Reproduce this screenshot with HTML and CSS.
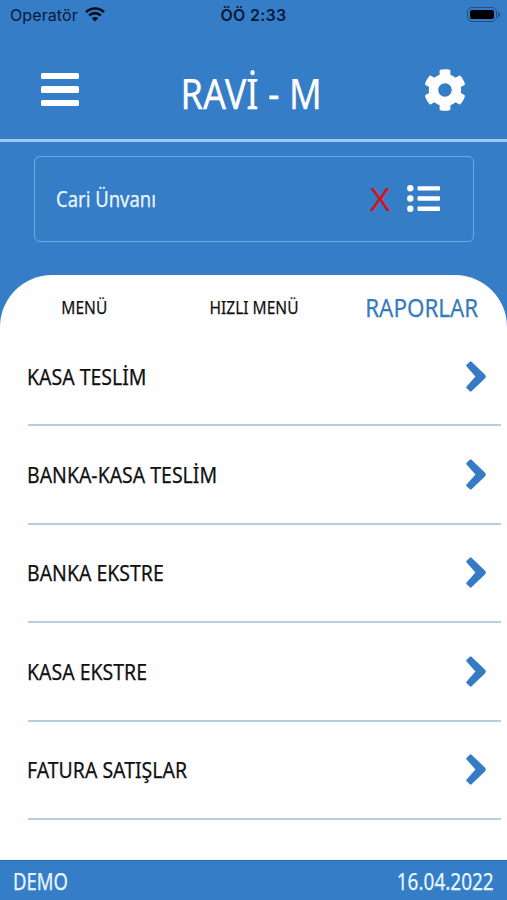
FILE: index.html
```html
<!DOCTYPE html>
<html lang="tr">
<head>
  <meta charset="UTF-8">
  <meta name="viewport" content="width=device-width, initial-scale=1">
  <title>RAVİ - M</title>
  <link rel="stylesheet" href="styles.css">
</head>
<body>
  <svg width="0" height="0" style="display:none">
    <symbol id="chevron" viewBox="0 0 20 31">
      <path d="M4.700 1.500L18 14.300q1.200 1.200 0 2.400L4.700 29.500L1.500 26.300L11 15.500L1.500 4.700z" />
    </symbol>
  </svg>

  <div class="app">
    <div class="status-bar">
      <div class="carrier">
        <span>Operatör</span>
        <svg class="wifi" viewBox="0 0 20 15">
          <path d="M1 5.2a12.7 12.7 0 0 1 18 0" />
          <path d="M4.2 8.5a8.2 8.2 0 0 1 11.6 0" />
          <path class="dot" d="M10 14.5L6.7 11.3a4.7 4.7 0 0 1 6.6 0z" />
        </svg>
      </div>
      <div class="clock">ÖÖ 2:33</div>
      <div class="battery"><div class="battery-level"></div></div>
    </div>

    <header class="header">
      <button class="icon-btn menu-btn" aria-label="Menü">
        <span></span><span></span><span></span>
      </button>
      <h1><span class="text">RAVİ - M</span></h1>
      <button class="icon-btn" aria-label="Ayarlar">
        <svg class="gear" viewBox="18 8 476 496">
          <path d="M487.4 315.7l-42.6-24.6c4.3-23.2 4.3-47 0-70.2l42.6-24.6c4.9-2.8 7.1-8.6 5.5-14-11.1-35.6-30-67.8-54.7-94.6-3.8-4.1-10-5.1-14.8-2.3L380.8 110c-17.9-15.4-38.5-27.3-60.8-35.1V25.8c0-5.6-3.9-10.5-9.4-11.7-36.7-8.2-74.3-7.8-109.2 0-5.5 1.2-9.4 6.1-9.4 11.7V75c-22.2 7.9-42.8 19.8-60.8 35.1L88.7 85.5c-4.9-2.8-11-1.9-14.8 2.3-24.7 26.7-43.6 58.9-54.7 94.6-1.7 5.4.6 11.2 5.5 14L67.3 221c-4.3 23.2-4.3 47 0 70.2l-42.6 24.6c-4.9 2.8-7.1 8.6-5.5 14 11.1 35.6 30 67.8 54.7 94.6 3.8 4.1 10 5.1 14.8 2.3l42.6-24.6c17.9 15.4 38.5 27.3 60.8 35.1v49.2c0 5.6 3.9 10.5 9.4 11.7 36.7 8.2 74.3 7.8 109.2 0 5.5-1.2 9.4-6.1 9.4-11.7v-49.2c22.2-7.9 42.8-19.8 60.8-35.1l42.6 24.6c4.9 2.8 11 1.9 14.8-2.3 24.7-26.7 43.6-58.9 54.7-94.6 1.5-5.5-.7-11.3-5.6-14.1zM256 336c-44.1 0-80-35.9-80-80s35.9-80 80-80 80 35.9 80 80-35.9 80-80 80z" />
        </svg>
      </button>
    </header>

    <section class="customer">
      <div class="customer-box">
        <span class="text customer-name">Cari Ünvanı</span>
        <button class="icon-btn clear-btn" aria-label="Temizle">X</button>
        <button class="icon-btn" aria-label="Liste">
          <svg class="list-icon" viewBox="0 0 33 27">
            <circle cx="3.3" cy="3.3" r="3.2" />
            <circle cx="3.3" cy="13.5" r="3.2" />
            <circle cx="3.3" cy="23.7" r="3.2" />
            <rect x="10.5" y="1.2" width="22.5" height="4.4" rx="1" />
            <rect x="10.5" y="11.3" width="22.5" height="4.4" rx="1" />
            <rect x="10.5" y="21.5" width="22.5" height="4.4" rx="1" />
          </svg>
        </button>
      </div>
    </section>

    <nav class="tabs">
      <div class="tab"><span class="text">MENÜ</span></div>
      <div class="tab"><span class="text">HIZLI MENÜ</span></div>
      <div class="tab active"><span class="text">RAPORLAR</span></div>
    </nav>

    <ul class="report-list">
      <li>
        <span class="text">KASA TESLİM</span>
        <svg class="arrow"><use href="#chevron" /></svg>
      </li>
      <li>
        <span class="text">BANKA-KASA TESLİM</span>
        <svg class="arrow"><use href="#chevron" /></svg>
      </li>
      <li>
        <span class="text">BANKA EKSTRE</span>
        <svg class="arrow"><use href="#chevron" /></svg>
      </li>
      <li>
        <span class="text">KASA EKSTRE</span>
        <svg class="arrow"><use href="#chevron" /></svg>
      </li>
      <li>
        <span class="text">FATURA SATIŞLAR</span>
        <svg class="arrow"><use href="#chevron" /></svg>
      </li>
    </ul>

    <footer class="footer">
      <span class="text">DEMO</span>
      <span class="text date">16.04.2022</span>
    </footer>
  </div>
</body>
</html>
```
FILE: styles.css
```css
* {
  box-sizing: border-box;
}
body {
  margin: 0;
  font-family: 'Noto Sans', sans-serif;
  background: #fefefe;
  color: #111;
}
.app {
  display: flex;
  flex-direction: column;
  height: 900px;
  background: linear-gradient(#367dc8 329px, #fefefe 329px);
}
/* narrow look for all the app labels */
.text {
  display: inline-block;
  white-space: nowrap;
  transform: scaleX(0.865);
  transform-origin: left center;
  -webkit-text-stroke: 0.25px currentColor;
}
.icon-btn {
  display: flex;
  padding: 0;
  border: none;
  background: none;
  cursor: pointer;
}

.status-bar {
  display: grid;
  grid-template-columns: 1fr auto 1fr;
  align-items: center;
  height: 29px;
  padding: 0 10px;
  font-family: Inter, sans-serif;
  color: #061a38;
}
.carrier {
  display: flex;
  align-items: center;
  gap: 7px;
  font-size: 16px;
  letter-spacing: 0.1px;
}
.wifi {
  width: 20px;
  height: 15px;
  fill: none;
  stroke: #04101f;
  stroke-width: 2.6;
}
.wifi .dot {
  fill: #04101f;
  stroke: none;
}
.clock {
  font-size: 16px;
  font-weight: 600;
  letter-spacing: 0.3px;
}
.battery {
  position: relative;
  justify-self: end;
  width: 30px;
  height: 15px;
  padding: 2px;
  border: 1px solid #235080;
  border-radius: 5px;
}
.battery::after {
  content: "";
  position: absolute;
  right: -4px;
  top: 4px;
  width: 2px;
  height: 5px;
  border-radius: 0 2px 2px 0;
  background: #235080;
}
.battery-level {
  height: 100%;
  border-radius: 2px;
  background: #000;
}

.header {
  display: flex;
  align-items: center;
  justify-content: space-between;
  height: 113px;
  padding: 14px 42px 0 41px;
  border-bottom: 3px solid #9dccf5;
}
.header h1 {
  margin: 4px 2px 0 0;
  font-size: 41px;
  font-weight: 400;
  line-height: 50px;
  color: #fff;
}
.header h1 .text {
  transform: scaleX(0.88);
  transform-origin: center;
}
.menu-btn {
  flex-direction: column;
  gap: 7px;
  width: 38px;
  margin-bottom: 3px;
}
.menu-btn span {
  height: 6.5px;
  border-radius: 1.5px;
  background: #fff;
}
.gear {
  width: 40px;
  height: 42px;
  margin-bottom: 2px;
  fill: #fff;
}

.customer {
  padding: 14px 33px 33px 34px;
}
.customer-box {
  display: flex;
  align-items: center;
  height: 86px;
  padding: 0 33px 2px 21px;
  border: 1px solid #70a8e0;
  border-radius: 6px;
}
.customer-name {
  flex: 1;
  font-size: 22.5px;
  color: #e8f5ff;
  transform: scaleX(0.82);
}
.clear-btn {
  margin: 4px 16px 0 0;
  font-family: 'Liberation Sans', sans-serif;
  font-size: 33px;
  line-height: 32px;
  color: #d4141c;
}
.list-icon {
  width: 33px;
  height: 27px;
  fill: #fff;
}

.tabs {
  display: grid;
  grid-template-columns: repeat(3, 1fr);
  align-items: center;
  height: 53px;
  padding-top: 10px;
  border-radius: 52px 52px 0 0;
  background: #fefefe;
  font-size: 18.5px;
}
.tab {
  text-align: center;
}
.tab .text {
  transform: scaleX(0.84);
  transform-origin: center;
}
.tab.active {
  padding-right: 2px;
  font-size: 26px;
  color: #367bbd;
}
.tab.active .text {
  transform: scaleX(0.86);
}

.report-list {
  flex: 1;
  margin: 0;
  padding: 0 6px 0 28px;
  list-style: none;
  background: #fefefe;
}
.report-list li {
  display: flex;
  align-items: center;
  justify-content: space-between;
  height: 98.4px;
  padding-right: 15px;
  border-bottom: 2px solid #b3cfe6;
  font-size: 22.5px;
}
.report-list .text {
  margin-left: -1px;
}
.arrow {
  width: 20px;
  height: 31px;
  fill: #367bc5;
  stroke: #367bc5;
  stroke-width: 2.4;
  stroke-linejoin: round;
}

.footer {
  display: flex;
  align-items: center;
  justify-content: space-between;
  height: 40px;
  padding: 0 13px 1px;
  background: #367dc8;
  border-top: 1px solid #28689f;
  font-size: 24px;
  color: #e8f7ff;
}
.footer .text {
  transform: scaleX(0.77);
}
.footer .date {
  transform: scaleX(0.79);
  transform-origin: right center;
}
```
